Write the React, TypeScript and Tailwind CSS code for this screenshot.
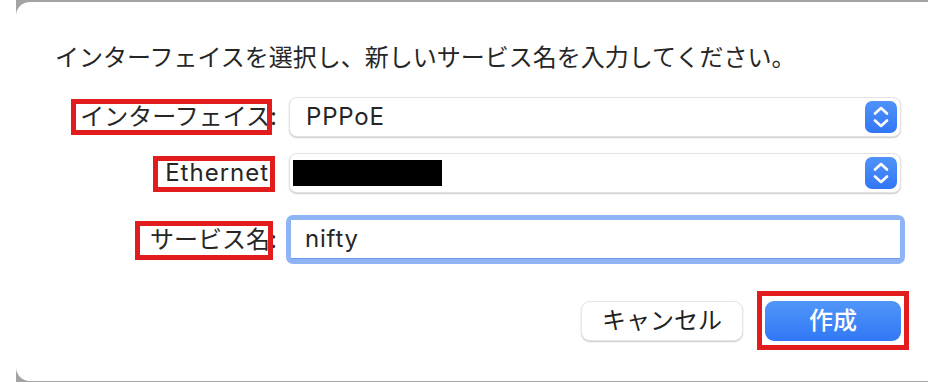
import React from "react";

const font = { fontFamily: '"Inter", "Noto Sans CJK JP", sans-serif' };

function Stepper() {
  return (
    <div className="flex h-[32px] w-[32px] shrink-0 items-center justify-center rounded-[7px] bg-gradient-to-b from-[#4f92f8] to-[#3376f5]">
      <svg width="32" height="32" viewBox="0 0 32 32" fill="none">
        <path d="M10 12.5 L16 7 L22 12.5" stroke="white" strokeWidth="2.6" strokeLinecap="round" strokeLinejoin="round" />
        <path d="M10 19.5 L16 25 L22 19.5" stroke="white" strokeWidth="2.6" strokeLinecap="round" strokeLinejoin="round" />
      </svg>
    </div>
  );
}

// red annotation box laid over its target
function Mark({ className }: { className: string }) {
  return <span className={`pointer-events-none absolute border-[5px] border-[#e21c1c] ${className}`} />;
}

export default function App() {
  return (
    <div className="h-[383px] w-[928px] overflow-hidden bg-white pl-[16px]" style={font}>
      <div className="h-[382px] w-[930px] bg-[#a4a4a4] pb-[1px] pt-[2px]">
        <div className="h-full w-full rounded-[14px] bg-white text-[24px] text-[#262626]">
          {/* Prompt */}
          <p className="ml-[39px] pt-[40px] leading-[32px]">
            インターフェイスを選択し、新しいサービス名を入力してください。
          </p>

          <div className="mt-[23px] flex flex-col">
            {/* Interface */}
            <div className="flex h-[40px] items-center">
              <div className="relative flex h-full w-[261px] items-center justify-end leading-[32px]">
                インターフェイス:
                <Mark className="bottom-[2px] left-[55px] right-[5px] top-[2px]" />
              </div>
              <div className="ml-[12px] flex h-[40px] w-[612px] items-center justify-between rounded-[8px] border border-[#e3e3e3] bg-white pl-[16px] pr-[3px] shadow-[0_1px_1.5px_rgba(0,0,0,0.22)]">
                <span className="leading-[32px] tracking-[0.8px]">PPPoE</span>
                <Stepper />
              </div>
            </div>

            {/* Ethernet */}
            <div className="mt-[16px] flex h-[40px] items-center">
              <div className="relative flex h-full w-[261px] items-center justify-end leading-[32px] tracking-[1px]">
                Ethernet:
                <Mark className="bottom-[1px] left-[137px] right-[2px] top-[3px]" />
              </div>
              <div className="ml-[12px] flex h-[40px] w-[612px] items-center justify-between rounded-[8px] border border-[#e3e3e3] bg-white pl-[3px] pr-[3px] shadow-[0_1px_1.5px_rgba(0,0,0,0.22)]">
                <span className="h-[26px] w-[149px] bg-black" />
                <Stepper />
              </div>
            </div>

            {/* Service name */}
            <div className="mt-[22px] flex h-[49px] items-center">
              <div className="relative flex h-full w-[261px] items-center justify-end leading-[32px]">
                サービス名:
                <Mark className="bottom-[4px] left-[119px] right-[4px] top-[6px]" />
              </div>
              <div className="ml-[9px] flex h-[49px] w-[619px] rounded-[7px] border-[5px] border-[#8fb4f5]">
                <div className="flex flex-1 items-center border-b border-[#6f9bea] bg-white pl-[14px] leading-[32px] tracking-[0.8px]">
                  nifty
                </div>
              </div>
            </div>
          </div>

          {/* Actions */}
          <div className="mt-[37px] flex gap-[22px] pl-[565px]">
            <button className="flex h-[40px] w-[162px] items-center justify-center rounded-[9px] border border-[#e6e6e6] bg-white text-[24px] leading-[32px] text-[#222] shadow-[0_1px_1.5px_rgba(0,0,0,0.22)]">
              キャンセル
            </button>
            <div className="relative">
              <button className="flex h-[40px] w-[136px] items-center justify-center rounded-[9px] bg-gradient-to-b from-[#5096f8] to-[#3277f5] text-[24px] font-medium leading-[32px] text-white">
                作成
              </button>
              <Mark className="-bottom-[9px] -left-[8px] -right-[8px] -top-[10px]" />
            </div>
          </div>
        </div>
      </div>
    </div>
  );
}
